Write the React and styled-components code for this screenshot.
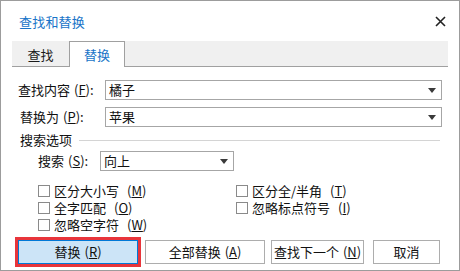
import React from 'react'
import styled, { createGlobalStyle } from 'styled-components';

const GlobalStyle = createGlobalStyle`
  html, body {
    margin: 0;
    padding: 0;
    background: #fff;
  }
  * { box-sizing: border-box; }
`;

const Dialog = styled.div`
  width: 460px;
  height: 271px;
  border: 1px solid #9c9c9c;
  background: #fff;
  font-family: "Noto Sans CJK SC", "Microsoft YaHei", sans-serif;
  font-size: 13px;
  line-height: 16px;
  color: #111;
  display: flex;
  flex-direction: column;
`;

const TitleBar = styled.div`
  height: 40px;
  display: flex;
  align-items: center;
  justify-content: space-between;
  padding: 1px 13px 0 18px;
`;

const Title = styled.div`
  color: #1874c8;
  font-size: 13px;
  letter-spacing: 0.2px;
`;

const Close = styled.svg`
  width: 11px;
  height: 11px;
`;

const TabBar = styled.div`
  display: flex;
  margin: 0 11px 0 11px;
  height: 26px;
  background: #f0f0f0;
  border-bottom: 1px solid #a0a0a0;
`;

const Tab = styled.div`
  width: ${p => p.$w}px;
  height: 26px;
  display: flex;
  align-items: center;
  justify-content: center;
  color: ${p => (p.$active ? '#1874c8' : '#1a1a1a')};
  background: ${p => (p.$active ? '#fff' : 'transparent')};
  border: 1px solid ${p => (p.$active ? '#a0a0a0' : 'transparent')};
  border-bottom: none;
  padding-top: 1px;
`;

const Form = styled.div`
  padding: 13px 17px 0 16px;
  display: flex;
  flex-direction: column;
`;

const Row = styled.div`
  display: flex;
  align-items: center;
  height: 20px;
  margin-bottom: ${p => p.$mb || 0}px;
  padding-left: ${p => p.$indent || 0}px;
`;

const Label = styled.div`
  width: ${p => p.$w}px;
  padding-left: ${p => p.$pl || 1}px;
  white-space: nowrap;
`;

const Key = styled.span`
  text-decoration: underline;
  text-underline-offset: 1px;
`;

const Paren = styled.span`
  margin-left: 4px;
`;

const Combo = styled.div`
  flex: ${p => (p.$w ? 'none' : 1)};
  width: ${p => (p.$w ? `${p.$w}px` : 'auto')};
  height: 20px;
  border: 1px solid #a6a6a6;
  display: flex;
  align-items: center;
  justify-content: space-between;
  padding: 0 5px 0 3px;
  background: #fff;
`;

const Arrow = styled.span`
  width: 0;
  height: 0;
  border-left: 4px solid transparent;
  border-right: 4px solid transparent;
  border-top: 5px solid #3a3a3a;
`;

const GroupHead = styled.div`
  display: flex;
  align-items: center;
  height: 14px;
  margin: 6px 0 4px 0;
  padding-left: 3px;

  &::after {
    content: '';
    flex: 1;
    height: 1px;
    background: #d4d4d4;
    margin-left: 7px;
    margin-right: 2px;
  }
`;

const Checks = styled.div`
  display: grid;
  grid-template-columns: 198px 1fr;
  grid-auto-rows: 17px;
  margin-top: 11px;
  padding-left: 21px;
`;

const Check = styled.label`
  display: flex;
  align-items: center;
  gap: 4px;
  height: 17px;
  line-height: 15px;
  grid-column: ${p => p.$col};
  grid-row: ${p => p.$row};
  white-space: nowrap;
`;

const Box = styled.span`
  width: 12px;
  height: 12px;
  border: 1px solid #8a8a8a;
  background: #fff;
`;

const Buttons = styled.div`
  display: flex;
  padding: 7px 0 0 17px;
`;

const Button = styled.button`
  font-family: inherit;
  font-size: 13px;
  line-height: 16px;
  color: #111;
  width: ${p => p.$w}px;
  height: 24px;
  margin-right: ${p => p.$mr || 0}px;
  background: ${p => (p.$primary ? '#cce4f7' : '#fff')};
  border: 1px solid ${p => (p.$primary ? '#0078d7' : '#adadad')};
  padding: 0;
  outline: ${p => (p.$primary ? '3px solid #e8353b' : 'none')};
  outline-offset: 0;
  white-space: nowrap;
`;

const Hot = ({ k }) => (
	<Paren>(<Key>{k}</Key>)</Paren>
)

const App = () => {
	return (
		<>
			<GlobalStyle />
			<Dialog>
				<TitleBar>
					<Title>查找和替换</Title>
					<Close viewBox="0 0 11 11">
						<path d="M1 1 L10 10 M10 1 L1 10" stroke="#222" strokeWidth="1.6" />
					</Close>
				</TitleBar>
				<TabBar>
					<Tab $w={57}>查找</Tab>
					<Tab $w={56} $active>替换</Tab>
				</TabBar>
				<Form>
					<Row $mb={7}>
						<Label $w={88}>查找内容<Hot k="F" />:</Label>
						<Combo>橘子<Arrow /></Combo>
					</Row>
					<Row>
						<Label $w={88} $pl={3}>替换为<Hot k="P" />:</Label>
						<Combo>苹果<Arrow /></Combo>
					</Row>
					<GroupHead>搜索选项</GroupHead>
					<Row $indent={20}>
						<Label $w={63}>搜索<Hot k="S" />:</Label>
						<Combo $w={134}>向上<Arrow /></Combo>
					</Row>
					<Checks>
						<Check $col={1} $row={1}><Box />区分大小写<Hot k="M" /></Check>
						<Check $col={1} $row={2}><Box />全字匹配<Hot k="O" /></Check>
						<Check $col={1} $row={3}><Box />忽略空字符<Hot k="W" /></Check>
						<Check $col={2} $row={1}><Box />区分全/半角<Hot k="T" /></Check>
						<Check $col={2} $row={2}><Box />忽略标点符号<Hot k="I" /></Check>
					</Checks>
				</Form>
				<Buttons>
					<Button $w={120} $mr={7} $primary>替换<Hot k="R" /></Button>
					<Button $w={120} $mr={6}>全部替换<Hot k="A" /></Button>
					<Button $w={93} $mr={9}>查找下一个<Hot k="N" /></Button>
					<Button $w={67}>取消</Button>
				</Buttons>
			</Dialog>
		</>
	)
}

export default App;
